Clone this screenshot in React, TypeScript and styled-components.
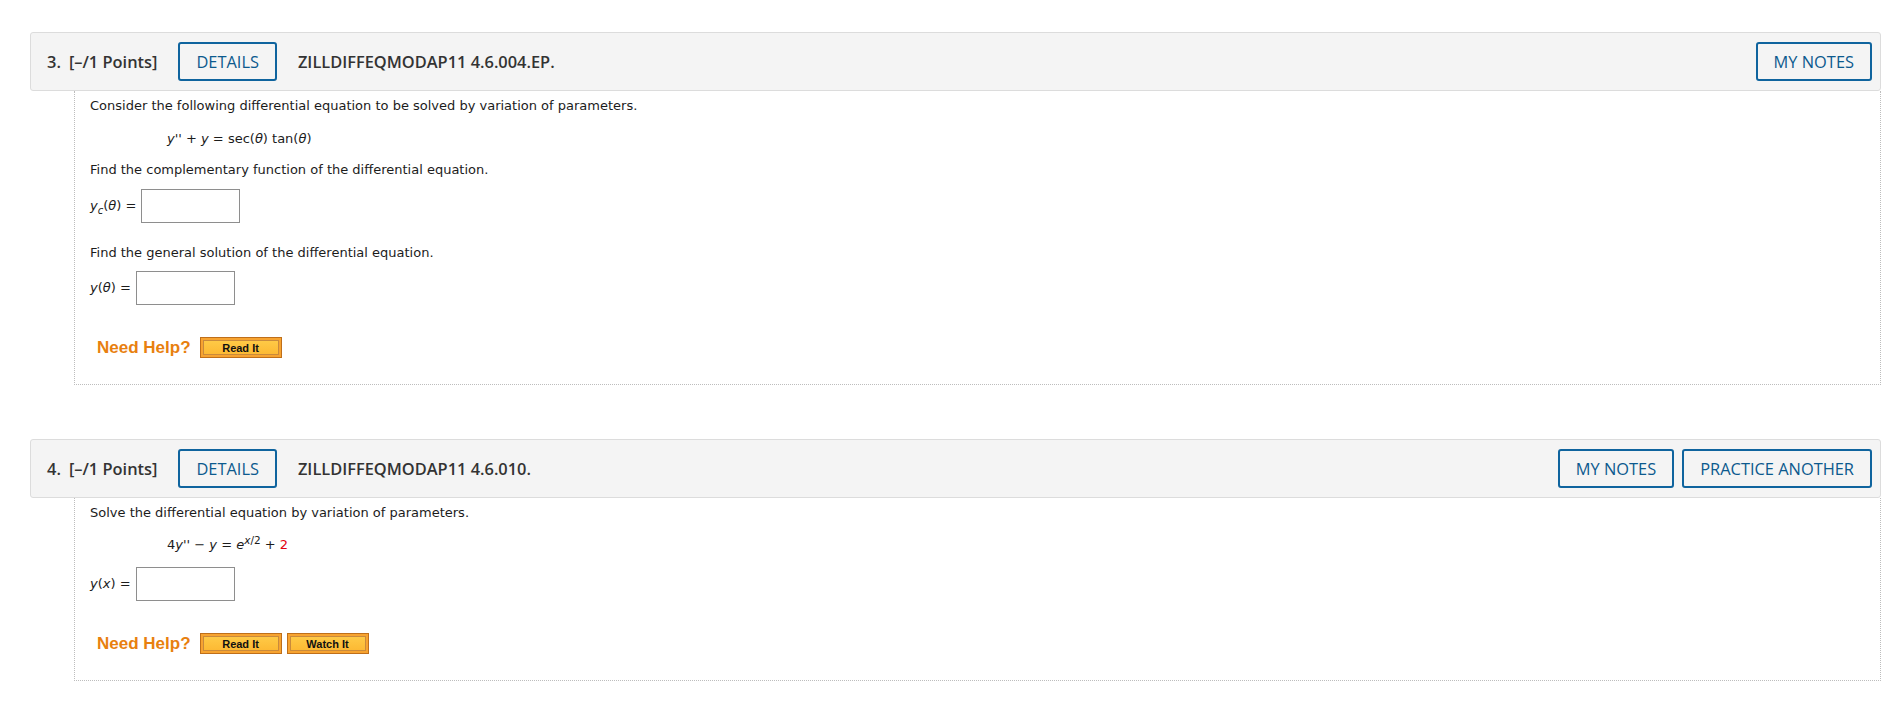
import { ReactNode } from 'react';
import styled, { createGlobalStyle } from 'styled-components';

const GlobalStyle = createGlobalStyle`
    html, body {
        margin: 0;
        padding: 0;
        background: #ffffff;
    }
`;

const Page = styled.div`
    padding: 32px 15px 20px 30px;
    display: flex;
    flex-direction: column;
    gap: 54px;
`;

const Question = styled.section`
    display: flex;
    flex-direction: column;
`;

const Header = styled.header`
    height: 57px;
    display: flex;
    align-items: center;
    padding: 0 8px 0 16px;
    background: #f4f4f4;
    border: 1px solid #dcdcdc;
    border-radius: 3px;
    font-family: 'Open Sans', 'Liberation Sans', sans-serif;
    font-size: 16.4px;
    color: #333333;
`;

const Number = styled.span`
    font-weight: 600;
    margin-right: 8px;
`;

const Points = styled.span`
    font-weight: 600;
    margin-right: 21px;
`;

const Title = styled.span`
    font-weight: 600;
    margin-left: 21px;
`;

const Actions = styled.div`
    margin-left: auto;
    display: flex;
    gap: 8px;
`;

const OutlineButton = styled.button`
    height: 39px;
    padding: 0 16px;
    background: transparent;
    border: 2px solid #0f649e;
    border-radius: 3px;
    font-family: 'Open Sans', 'Liberation Sans', sans-serif;
    font-size: 16.4px;
    color: #0c5a8e;
    text-transform: uppercase;
    cursor: pointer;
`;

const Body = styled.div`
    margin-left: 44px;
    padding: 7px 15px 26px 15px;
    border: 1px dotted #bdbdbd;
    border-top: none;
    font-family: 'DejaVu Sans', 'Bitstream Vera Sans', Verdana, sans-serif;
    font-size: 13px;
    line-height: 16px;
    color: #1c1c1c;
`;

const Prompt = styled.p<{ $top?: number }>`
    margin: ${({ $top }) => $top ?? 0}px 0 0 0;
`;

const Equation = styled.div<{ $top: number }>`
    margin: ${({ $top }) => $top}px 0 0 77px;
`;

const Var = styled.i`
    font-style: italic;
`;

const Sub = styled.sub`
    font-size: 10px;
    line-height: 0;
    vertical-align: -4px;
`;

const Sup = styled.sup`
    font-size: 10.5px;
    line-height: 0;
    vertical-align: 5px;
`;

const Red = styled.span`
    color: #e3000f;
`;

const AnswerRow = styled.div<{ $top: number }>`
    margin-top: ${({ $top }) => $top}px;
    display: flex;
    align-items: center;
    gap: 5px;
`;

const AnswerBox = styled.input`
    box-sizing: border-box;
    width: 99px;
    height: 34px;
    margin: 0;
    border: 1px solid #8e8e8e;
    background: #ffffff;
`;

const HelpRow = styled.div`
    margin-top: 32px;
    margin-left: 7px;
    height: 21px;
    display: flex;
    align-items: center;
    gap: 5px;
`;

const HelpLabel = styled.span`
    font-family: 'Liberation Sans', Arial, sans-serif;
    font-weight: 700;
    font-size: 17px;
    color: #e8800f;
    margin-right: 4px;
`;

const HelpButton = styled.button`
    box-sizing: border-box;
    width: 82px;
    height: 21px;
    padding: 0;
    border: 1px solid #bf6f1a;
    background: linear-gradient(#ffcd4a, #fcb630);
    box-shadow: inset 0 0 0 2px #f7a330, inset 0 0 0 3px #c98a3c;
    font-family: 'Liberation Sans', Arial, sans-serif;
    font-weight: 700;
    font-size: 11px;
    color: #111111;
    cursor: pointer;
`;

interface QuestionCardProps {
    number: number;
    code: string;
    practice?: boolean;
    children: ReactNode;
}

const QuestionCard = ({ number, code, practice, children }: QuestionCardProps) => (
    <Question>
        <Header>
            <Number>{number}.</Number>
            <Points>[–/1 Points]</Points>
            <OutlineButton>Details</OutlineButton>
            <Title>{code}</Title>
            <Actions>
                <OutlineButton>My Notes</OutlineButton>
                {practice && <OutlineButton>Practice Another</OutlineButton>}
            </Actions>
        </Header>
        <Body>{children}</Body>
    </Question>
);

const Theta = () => <Var>θ</Var>;

export default function App() {
    return (
        <>
            <GlobalStyle />
            <Page>
                <QuestionCard number={3} code="ZILLDIFFEQMODAP11 4.6.004.EP.">
                    <Prompt>Consider the following differential equation to be solved by variation of parameters.</Prompt>
                    <Equation $top={17}>
                        <Var>y</Var>'' + <Var>y</Var> = sec(<Theta />) tan(<Theta />)
                    </Equation>
                    <Prompt $top={15}>Find the complementary function of the differential equation.</Prompt>
                    <AnswerRow $top={11}>
                        <span>
                            <Var>y</Var>
                            <Sub>
                                <Var>c</Var>
                            </Sub>
                            (<Theta />) =
                        </span>
                        <AnswerBox type="text" />
                    </AnswerRow>
                    <Prompt $top={22}>Find the general solution of the differential equation.</Prompt>
                    <AnswerRow $top={10}>
                        <span>
                            <Var>y</Var>(<Theta />) =
                        </span>
                        <AnswerBox type="text" />
                    </AnswerRow>
                    <HelpRow>
                        <HelpLabel>Need Help?</HelpLabel>
                        <HelpButton>Read It</HelpButton>
                    </HelpRow>
                </QuestionCard>

                <QuestionCard number={4} code="ZILLDIFFEQMODAP11 4.6.010." practice>
                    <Prompt>Solve the differential equation by variation of parameters.</Prompt>
                    <Equation $top={16}>
                        4<Var>y</Var>'' − <Var>y</Var> = <Var>e</Var>
                        <Sup>
                            <Var>x</Var>/2
                        </Sup>{' '}
                        + <Red>2</Red>
                    </Equation>
                    <AnswerRow $top={14}>
                        <span>
                            <Var>y</Var>(<Var>x</Var>) =
                        </span>
                        <AnswerBox type="text" />
                    </AnswerRow>
                    <HelpRow>
                        <HelpLabel>Need Help?</HelpLabel>
                        <HelpButton>Read It</HelpButton>
                        <HelpButton>Watch It</HelpButton>
                    </HelpRow>
                </QuestionCard>
            </Page>
        </>
    );
}
